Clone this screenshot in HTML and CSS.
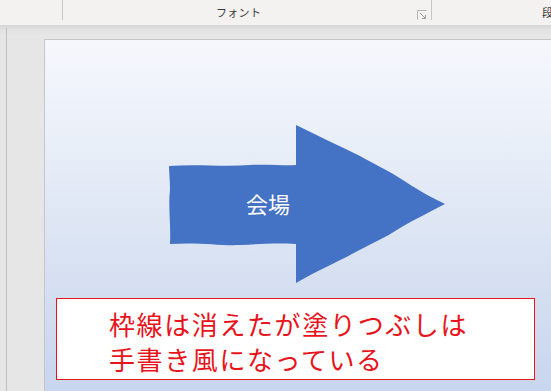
FILE: index.html
```html
<!DOCTYPE html>
<html lang="ja">
<head>
<meta charset="utf-8">
<link rel="stylesheet" href="styles.css">
</head>
<body>
<div class="ribbon">
  <div class="grp grp-a"></div>
  <div class="grp grp-font">
    <span class="grp-label">フォント</span>
    <svg class="launcher" width="10" height="10" viewBox="0 0 10 10">
      <path d="M0.5 9.5 V0.5 H9.5" fill="none" stroke="#b5b5b5" stroke-width="1"/>
      <path d="M3 3 L8.5 8.5 M8.5 5 V8.5 H5" fill="none" stroke="#9a9a9a" stroke-width="1"/>
    </svg>
  </div>
  <div class="grp grp-para"><span class="grp-label">段落</span></div>
</div>
<div class="workspace">
  <div class="rail"></div>
  <div class="slide">
    <svg class="arrow" width="507" height="352" viewBox="44 39 507 352">
      <path d="M169,166 C195,164 225,167 250,165 C270,164 285,166 296,165 L296,125 C318,136 340,146 360,156 C378,166 395,174 412,186 C425,194 435,199 445,204 C430,212 415,219 400,228 C385,238 370,244 352,254 C335,263 315,272 296,283 L296,244 C275,243 260,244 240,245 C220,246 200,242 170,244 C171,225 168,205 170,190 C170,180 169,172 169,166 Z" fill="#4472c4"/>
    </svg>
    <div class="arrow-label">会場</div>
    <div class="note">
      <p>枠線は消えたが塗りつぶしは</p>
      <p>手書き風になっている</p>
    </div>
  </div>
</div>
</body>
</html>
```
FILE: styles.css
```css
html, body {
  margin: 0;
  padding: 0;
}
body {
  width: 551px;
  height: 391px;
  overflow: hidden;
  background: #e6e6e6;
  font-family: "Noto Sans CJK JP", "Noto Sans", sans-serif;
}
.ribbon {
  height: 25px;
  background: #f3f2f1;
  display: flex;
  align-items: flex-start;
}
.grp {
  height: 20px;
  position: relative;
  box-sizing: border-box;
}
.grp-a {
  width: 63px;
  border-right: 1px solid #c8c6c4;
}
.grp-font {
  width: 369px;
  border-right: 1px solid #c8c6c4;
}
.grp-font .grp-label {
  position: absolute;
  left: 153px;
  top: 5px;
}
.grp-label {
  font-size: 11px;
  line-height: 14px;
  color: #3b3a39;
  letter-spacing: 0.3px;
}
.launcher {
  position: absolute;
  left: 354px;
  top: 10px;
}
.grp-para {
  flex: 1;
}
.grp-para .grp-label {
  position: absolute;
  left: 110px;
  top: 5px;
  white-space: nowrap;
}
.workspace {
  height: 366px;
  display: flex;
  background: linear-gradient(to bottom, #d6d6d6 0px, #e2e2e2 5px, #e6e6e6 10px);
}
.rail {
  width: 1px;
  margin-left: 6px;
  margin-top: 3px;
  background: #c2c2c2;
}
.slide {
  position: relative;
  margin-left: 37px;
  margin-top: 14px;
  flex: 1;
  border-left: 1px solid #c6c6c6;
  border-top: 1px solid #c6c6c6;
  background: linear-gradient(to bottom, #f5f7fc 0px, #e8eef8 110px, #d7e1f2 230px, #c8d5ee 352px);
}
.arrow {
  position: absolute;
  left: -1px;
  top: -1px;
}
.arrow-label {
  position: absolute;
  left: 201px;
  top: 148px;
  font-size: 22px;
  line-height: 30px;
  color: #ffffff;
}
.note {
  position: absolute;
  left: 11px;
  top: 258px;
  width: 479px;
  height: 82px;
  box-sizing: border-box;
  background: #ffffff;
  border: 1px solid #e8141c;
  padding: 7px 0 0 52px;
}
.note p {
  margin: 0;
  font-size: 26px;
  line-height: 35px;
  letter-spacing: 1.6px;
  color: #e8141c;
  white-space: nowrap;
}
```
